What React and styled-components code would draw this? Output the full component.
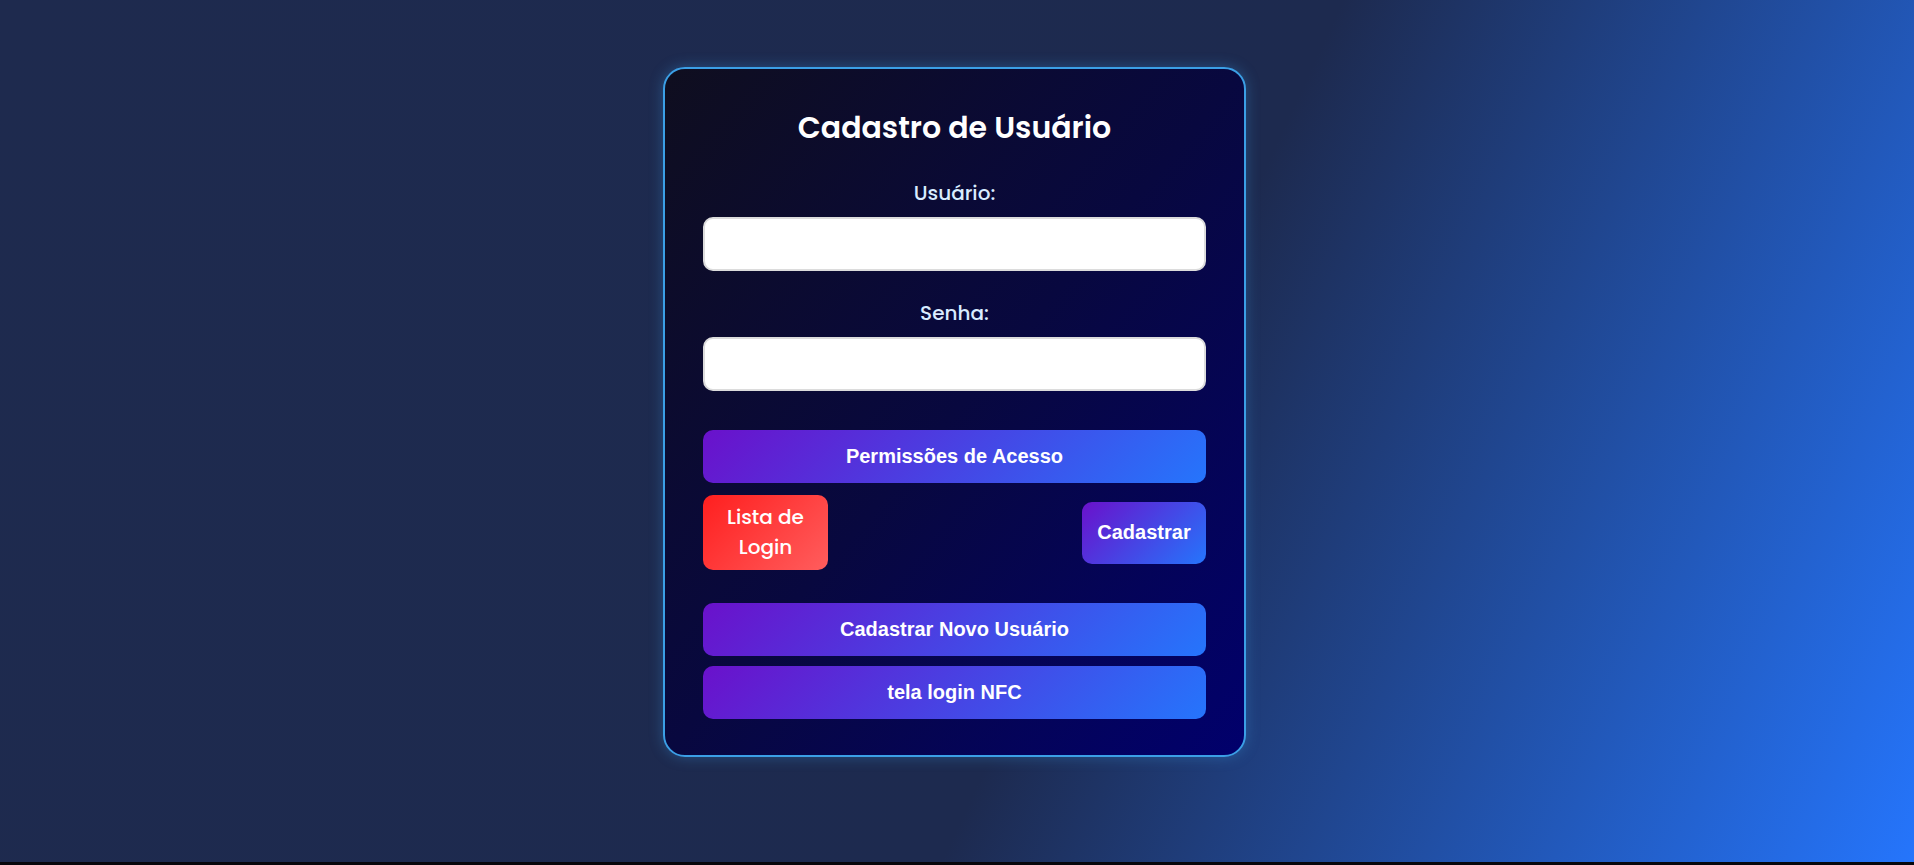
import React from 'react';
import styled, { createGlobalStyle } from 'styled-components';

const GlobalStyle = createGlobalStyle`
    * {
        box-sizing: border-box;
    }

    body {
        margin: 0;
        background: #07070c;
        font-family: "Poppins", "Inter", "Noto Sans", sans-serif;
    }
`;

const Cadastro = () => {
    return (
        <Page>
            <GlobalStyle />
            <Card>
                <Title>Cadastro de Usuário</Title>
                <Field>
                    <Label htmlFor="usuario">Usuário:</Label>
                    <Input id="usuario" type="text" />
                </Field>
                <Field $space={31}>
                    <Label htmlFor="senha">Senha:</Label>
                    <Input id="senha" type="password" />
                </Field>
                <GradientButton $space={39}>Permissões de Acesso</GradientButton>
                <ActionRow>
                    <DangerButton>Lista de Login</DangerButton>
                    <SmallButton>Cadastrar</SmallButton>
                </ActionRow>
                <GradientButton $space={33}>Cadastrar Novo Usuário</GradientButton>
                <GradientButton $space={10}>tela login NFC</GradientButton>
            </Card>
        </Page>
    );
};

export default Cadastro;

// STYLED COMPONENTS:

const Page = styled.main`
    height: calc(100vh - 3px);
    min-height: 862px;
    display: flex;
    justify-content: center;
    align-items: flex-start;
    padding: 67px 0 0;
    background: linear-gradient(115deg, #1e2a4e 0%, #1d2a4f 58%, #2575fc 100%);
`;

const Card = styled.section`
    width: 583px;
    margin-right: 5px;
    display: flex;
    flex-direction: column;
    padding: 42px 38px 36px;
    border: 2px solid #3b9fe6;
    border-radius: 22px;
    background: linear-gradient(to bottom right, #0f0e1f 0%, #08083f 50%, #01006c 100%);
    box-shadow: 0 0 14px rgba(59, 159, 230, 0.35);
`;

const Title = styled.h2`
    margin: 0 0 37px;
    font-size: 30px;
    line-height: 34px;
    font-weight: 600;
    color: #ffffff;
    text-align: center;
`;

const Field = styled.div`
    display: flex;
    flex-direction: column;
    gap: 13px;
    margin-top: ${({ $space }) => ($space ? `${$space}px` : '0')};
`;

const Label = styled.label`
    font-size: 20px;
    line-height: 22px;
    font-weight: 500;
    color: #d9ecff;
    text-align: center;
`;

const Input = styled.input`
    height: 54px;
    width: 100%;
    padding: 0 14px;
    border: 2px solid #dcdcdc;
    border-radius: 10px;
    background: #ffffff;
    font-size: 16px;
    outline: none;
`;

const GradientButton = styled.button`
    height: 53px;
    width: 100%;
    margin-top: ${({ $space }) => ($space ? `${$space}px` : '0')};
    border: none;
    border-radius: 10px;
    background: linear-gradient(135deg, #6a11cb 0%, #2575fc 100%);
    color: #ffffff;
    font-family: "Liberation Sans", Arial, sans-serif;
    font-size: 20px;
    font-weight: 700;
    cursor: pointer;
`;

const ActionRow = styled.div`
    margin-top: 12px;
    display: flex;
    justify-content: space-between;
    align-items: center;
`;

const DangerButton = styled.button`
    width: 125px;
    padding: 8px 16px;
    border: none;
    border-radius: 10px;
    background: linear-gradient(135deg, #ff1f1f 0%, #ff5d5d 100%);
    color: #ffffff;
    font-family: "Poppins", "Inter", "Noto Sans", sans-serif;
    font-size: 20px;
    line-height: 29.5px;
    font-weight: 500;
    cursor: pointer;
`;

const SmallButton = styled.button`
    width: 124px;
    height: 62px;
    border: none;
    border-radius: 10px;
    background: linear-gradient(135deg, #6a11cb 0%, #2575fc 100%);
    color: #ffffff;
    font-family: "Liberation Sans", Arial, sans-serif;
    font-size: 20px;
    font-weight: 700;
    cursor: pointer;
`;
